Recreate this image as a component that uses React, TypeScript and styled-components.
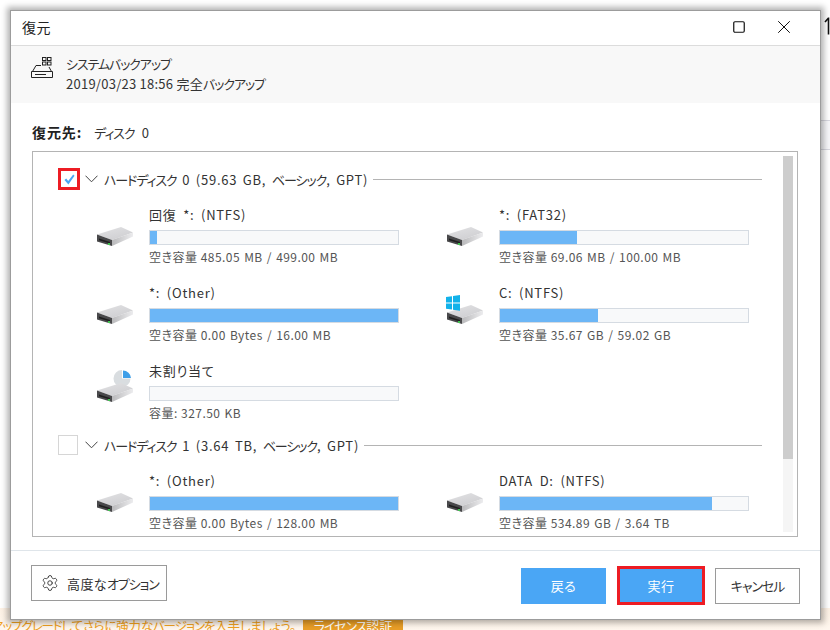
import React from 'react'
import styled, { createGlobalStyle } from 'styled-components'
import { Settings, Square, X } from 'lucide-react'

type Volume = {
    name: string
    label: string
    value: string
    used: number
    kind?: 'plain' | 'windows' | 'pie'
}

type Disk = {
    title: string
    checked: boolean
    volumes: Volume[]
}

const disks: Disk[] = [
    {
        title: 'ハードディスク 0 (59.63 GB, ベーシック, GPT)',
        checked: true,
        volumes: [
            { name: '回復 *: (NTFS)', label: '空き容量', value: '485.05 MB / 499.00 MB', used: 2.8 },
            { name: '*: (FAT32)', label: '空き容量', value: '69.06 MB / 100.00 MB', used: 30.9 },
            { name: '*: (Other)', label: '空き容量', value: '0.00 Bytes / 16.00 MB', used: 100 },
            { name: 'C: (NTFS)', label: '空き容量', value: '35.67 GB / 59.02 GB', used: 39.6, kind: 'windows' },
            { name: '未割り当て', label: '容量:', value: '327.50 KB', used: 0, kind: 'pie' }
        ]
    },
    {
        title: 'ハードディスク 1 (3.64 TB, ベーシック, GPT)',
        checked: false,
        volumes: [
            { name: '*: (Other)', label: '空き容量', value: '0.00 Bytes / 128.00 MB', used: 100 },
            { name: 'DATA D: (NTFS)', label: '空き容量', value: '534.89 GB / 3.64 TB', used: 85.4 }
        ]
    }
]

// the original UI font has narrow katakana, so those runs get tighter tracking
function Jp({ text }: { text: string }) {
    const parts = text.split(/([\u30a0-\u30ff]+)/)
    return (
        <>
            {parts.map((part, i) => (i % 2 === 1 ? <Katakana key={i}>{part}</Katakana> : part))}
        </>
    )
}

function DriveIcon({ kind = 'plain', id }: { kind?: Volume['kind']; id: string }) {
    return (
        <DriveSvg viewBox="0 0 40 44" width="40" height="44">
            <defs>
                <linearGradient id={`top-${id}`} x1="0" y1="0" x2="0.6" y2="1">
                    <stop offset="0" stopColor="#e2e2e4" />
                    <stop offset="1" stopColor="#cfcfd2" />
                </linearGradient>
                <linearGradient id={`side-${id}`} x1="0" y1="0" x2="1" y2="0">
                    <stop offset="0" stopColor="#b9b9bb" />
                    <stop offset="1" stopColor="#ececee" />
                </linearGradient>
            </defs>
            {kind === 'pie' && (
                <g>
                    <path d="M27 9 A8.5 8.5 0 1 0 35.5 17.5 L27 17.5 Z" fill="#d9dde0" />
                    <path d="M28 9.5 A8 8 0 0 1 36 17 L28 17 Z" fill="#3f9fe8" />
                </g>
            )}
            <polygon points="2,29.5 26,22 38,27.5 17,35" fill={`url(#top-${id})`} />
            <polygon points="2,29.5 17,35 17,41 2,36.5" fill="#48484a" />
            <polygon points="4,33.5 15,37 15,38.6 4,35.2" fill="#1e1e1e" />
            <polygon points="17,35 38,27.5 38,31.5 17,41" fill={`url(#side-${id})`} />
            <rect x="13" y="38" width="2" height="2" fill="#3fc24f" />
            {kind === 'windows' && (
                <g fill="#12b2ea">
                    <polygon points="1,14 7,13.2 7,19.6 1,19.6" />
                    <polygon points="8,13 15,12 15,19.6 8,19.6" />
                    <polygon points="1,20.6 7,20.6 7,26.6 1,25.8" />
                    <polygon points="8,20.6 15,20.6 15,27.8 8,26.8" />
                </g>
            )}
        </DriveSvg>
    )
}

function BackupIcon() {
    return (
        <HeaderSvg viewBox="0 0 22 22" width="22" height="22" fill="none" stroke="#222" strokeWidth="1">
            <path d="M1.5 14.5 L5 8.5 H10 M18 10 L20.5 14.5 M0.5 14.5 H21.5 V20.5 H0.5 Z" />
            <path d="M4 17.5 H15" />
            <rect x="11.5" y="0.5" width="3.5" height="3" />
            <rect x="16.5" y="0.5" width="3.5" height="3" />
            <rect x="11.5" y="5" width="3.5" height="3" />
            <rect x="16.5" y="5" width="3.5" height="3" />
        </HeaderSvg>
    )
}

export default function App() {
    return (
        <>
            <GlobalStyle />
            <Desktop>
                <EdgeStrip>
                    <EdgeArrow viewBox="0 0 8 18" width="8" height="18" fill="none" stroke="#111">
                        <path d="M5.5 0.5 V17.5 M5.5 1 L2 5" strokeWidth="1.6" />
                    </EdgeArrow>
                    <EdgeRow />
                </EdgeStrip>
                <UpgradeBar>
                    <UpgradeClip>
                        <UpgradeText>
                            <Jp text="アップグレードしてさらに強力なバージョンを入手しましょう。" />
                        </UpgradeText>
                    </UpgradeClip>
                    <LicenseButton>
                        <Jp text="ライセンス認証" />
                    </LicenseButton>
                </UpgradeBar>

                <Dialog>
                    <TitleBar>
                        <DialogTitle>復元</DialogTitle>
                        <WindowButton>
                            <Square size={14} strokeWidth={1.2} absoluteStrokeWidth />
                        </WindowButton>
                        <WindowButton>
                            <X size={22} strokeWidth={1} absoluteStrokeWidth />
                        </WindowButton>
                    </TitleBar>

                    <BackupInfo>
                        <BackupIcon />
                        <BackupText>
                            <div>
                                <Jp text="システムバックアップ" />
                            </div>
                            <div>
                                <Jp text="2019/03/23 18:56 完全バックアップ" />
                            </div>
                        </BackupText>
                    </BackupInfo>

                    <Target>
                        <TargetLabel>復元先:</TargetLabel>
                        <TargetValue>
                            <Jp text="ディスク 0" />
                        </TargetValue>
                    </Target>

                    <ListBox>
                        <ListScroll>
                            {disks.map((disk) => (
                                <DiskSection key={disk.title}>
                                    <DiskHeader>
                                        <CheckBox $marked={disk.checked}>
                                            {disk.checked && (
                                                <svg viewBox="0 0 12 12" width="11" height="11">
                                                    <polygon
                                                        points="0.5,6.5 2.4,5 4.6,7.6 10,0.5 11.5,1.8 4.8,11.5"
                                                        fill="#4aa6f5"
                                                    />
                                                </svg>
                                            )}
                                        </CheckBox>
                                        <svg viewBox="0 0 13 8" width="13" height="8" fill="none" stroke="#444">
                                            <path d="M0.5 0.7 L6.5 6.8 L12.5 0.7" />
                                        </svg>
                                        <DiskTitle>
                                            <Jp text={disk.title} />
                                        </DiskTitle>
                                        <DiskRule />
                                    </DiskHeader>
                                    <VolumeGrid>
                                        {disk.volumes.map((volume, i) => (
                                            <VolumeItem key={volume.name + i}>
                                                <DriveIcon kind={volume.kind} id={`${disk.title.length}-${i}`} />
                                                <VolumeBody>
                                                    <VolumeName>{volume.name}</VolumeName>
                                                    <UsageBar>
                                                        <UsageFill style={{ width: `${volume.used}%` }} />
                                                    </UsageBar>
                                                    <VolumeUsage>
                                                        {volume.label} <UsageValue>{volume.value}</UsageValue>
                                                    </VolumeUsage>
                                                </VolumeBody>
                                            </VolumeItem>
                                        ))}
                                    </VolumeGrid>
                                </DiskSection>
                            ))}
                        </ListScroll>
                        <ScrollTrack>
                            <ScrollThumb />
                        </ScrollTrack>
                    </ListBox>

                    <Footer>
                        <OptionButton>
                            <Settings size={18} strokeWidth={1.2} color="#333" />
                            <span>
                                <Jp text="高度なオプション" />
                            </span>
                        </OptionButton>
                        <FooterActions>
                            <PrimaryButton>戻る</PrimaryButton>
                            <PrimaryButton $outlined>実行</PrimaryButton>
                            <CancelButton>
                                <Jp text="キャンセル" />
                            </CancelButton>
                        </FooterActions>
                    </Footer>
                </Dialog>
            </Desktop>
        </>
    )
}

const GlobalStyle = createGlobalStyle`
    html, body {
        margin: 0;
        padding: 0;
        background: #fff;
    }
    * {
        box-sizing: border-box;
    }
`

const Desktop = styled.div`
    position: relative;
    width: 830px;
    height: 630px;
    overflow: hidden;
    background: #fff;
    font-family: 'Noto Sans CJK JP', 'Noto Sans', sans-serif;
    font-feature-settings: 'palt';
    color: #333;
`

const Katakana = styled.span`
    letter-spacing: -1.1px;
`

const EdgeStrip = styled.div`
    position: absolute;
    top: 0;
    right: 0;
    width: 9px;
    height: 200px;
`

const EdgeArrow = styled.svg`
    display: block;
    margin: 17px 0 85px 2px;
`

const EdgeRow = styled.div`
    height: 30px;
    background: #f7f7fa;
    border-top: 1px solid #d8d8e0;
    border-bottom: 1px solid #d8d8e0;
`

const UpgradeBar = styled.div`
    position: absolute;
    left: 0;
    right: 0;
    bottom: 0;
    height: 22px;
    display: flex;
    align-items: flex-start;
    padding-top: 10px;
    background: linear-gradient(#fdf1e4, #fff7ee);
    overflow: hidden;
`

const UpgradeClip = styled.div`
    width: 296px;
    flex: none;
    display: flex;
    justify-content: flex-end;
    overflow: hidden;
`

const UpgradeText = styled.div`
    flex: none;
    white-space: nowrap;
    font-size: 12.5px;
    line-height: 16px;
    letter-spacing: -0.2px;
    color: #f0a020;
`

const LicenseButton = styled.div`
    margin-left: 7px;
    width: 100px;
    height: 12px;
    background: #e99e27;
    color: #fff;
    font-size: 13px;
    line-height: 16px;
    text-align: center;
    overflow: hidden;
`

const Dialog = styled.div`
    position: absolute;
    left: 10px;
    top: 10px;
    width: 811px;
    height: 610px;
    display: flex;
    flex-direction: column;
    background: #fff;
    border: 1px solid #9c9c9c;
    box-shadow: 0 0 6px 3px rgba(0, 0, 0, 0.3);
`

const TitleBar = styled.div`
    height: 35px;
    flex: none;
    display: flex;
    align-items: center;
    padding: 0 14px 2px 11px;
    border-bottom: 1px solid #dcdcdc;
`

const DialogTitle = styled.div`
    flex: 1;
    font-size: 14px;
    letter-spacing: 0.5px;
    color: #222;
`

const WindowButton = styled.div`
    width: 45px;
    height: 22px;
    display: flex;
    align-items: center;
    justify-content: center;
    color: #111;
`

const BackupInfo = styled.div`
    height: 57px;
    flex: none;
    display: flex;
    align-items: center;
    gap: 13px;
    padding: 0 0 2px 20px;
    background: #f8f8f8;
`

const HeaderSvg = styled.svg`
    flex: none;
    margin-bottom: 12px;
`

const BackupText = styled.div`
    font-size: 13px;
    line-height: 20px;
    letter-spacing: 0.25px;
    color: #333;
`

const Target = styled.div`
    flex: none;
    height: 20px;
    margin-top: 19px;
    margin-bottom: 1px;
    padding-left: 21px;
    display: flex;
    align-items: center;
    gap: 12px;
    font-size: 13px;
    letter-spacing: 0.4px;
    color: #333;
`

const TargetLabel = styled.span`
    font-size: 14px;
    font-weight: 700;
    letter-spacing: 0.9px;
    color: #222;
`

const TargetValue = styled.span`
    word-spacing: 4px;
`

const ListBox = styled.div`
    flex: none;
    height: 386px;
    margin: 8px 22px 0 21px;
    display: flex;
    border: 1px solid #b4b4b4;
`

const ListScroll = styled.div`
    flex: 1;
    min-width: 0;
    overflow: hidden;
    padding: 16px 21px 0 25px;
`

const DiskSection = styled.section`
    margin-bottom: 12px;
`

const DiskHeader = styled.div`
    height: 22px;
    display: flex;
    align-items: center;
`

const CheckBox = styled.div<{ $marked: boolean }>`
    width: ${(p) => (p.$marked ? '22px' : '20px')};
    height: ${(p) => (p.$marked ? '22px' : '20px')};
    flex: none;
    margin-right: ${(p) => (p.$marked ? '5px' : '7px')};
    display: flex;
    align-items: center;
    justify-content: center;
    background: #fff;
    border: ${(p) => (p.$marked ? '3px solid #ed1c24' : '1px solid #d6d6d6')};
`

const DiskTitle = styled.div`
    margin-left: 6px;
    font-size: 13px;
    letter-spacing: 0.75px;
    word-spacing: 2px;
    white-space: nowrap;
    color: #333;
`

const DiskRule = styled.div`
    flex: 1;
    height: 1px;
    margin-left: 5px;
    background: #b4b4b4;
`

const VolumeGrid = styled.div`
    display: grid;
    grid-template-columns: 350px 304px;
    row-gap: 17px;
    margin-top: 15px;
    padding-left: 37px;
`

const VolumeItem = styled.div`
    display: flex;
    gap: 14px;
`

const DriveSvg = styled.svg`
    flex: none;
`

const VolumeBody = styled.div`
    width: 250px;
`

const VolumeName = styled.div`
    height: 20px;
    margin-bottom: 5px;
    font-size: 13px;
    line-height: 20px;
    letter-spacing: 0.75px;
    word-spacing: 3px;
    color: #333;
`

const UsageBar = styled.div`
    height: 15px;
    background: #f8f9fa;
    border: 1px solid #d5dbe2;
`

const UsageFill = styled.div`
    height: 100%;
    background: #6cb6f6;
`

const VolumeUsage = styled.div`
    height: 18px;
    margin-top: 3px;
    font-size: 12px;
    line-height: 18px;
    letter-spacing: 0.5px;
    white-space: nowrap;
    color: #555;
`

const UsageValue = styled.span`
    letter-spacing: 0.45px;
    word-spacing: 1px;
`

const ScrollTrack = styled.div`
    flex: none;
    width: 10px;
    margin: 4px 4px 4px 0;
    background: #f5f5f5;
`

const ScrollThumb = styled.div`
    height: 303px;
    background: #cdcdcd;
`

const Footer = styled.div`
    flex: none;
    height: 71px;
    margin-top: 13px;
    padding: 14px 20px 0 20px;
    display: flex;
    align-items: flex-start;
    justify-content: space-between;
    border-top: 1px solid #dfe5ea;
`

const OptionButton = styled.div`
    width: 136px;
    height: 36px;
    display: flex;
    align-items: center;
    gap: 8px;
    padding-left: 9px;
    border: 1px solid #9a9a9a;
    font-size: 13px;
    letter-spacing: 0.4px;
    white-space: nowrap;
    color: #333;
`

const FooterActions = styled.div`
    display: flex;
    align-items: center;
    gap: 10px;
    margin-top: 1px;
`

const PrimaryButton = styled.div<{ $outlined?: boolean }>`
    width: ${(p) => (p.$outlined ? '88px' : '85px')};
    height: ${(p) => (p.$outlined ? '39px' : '36px')};
    margin-left: ${(p) => (p.$outlined ? '1px' : '0')};
    display: flex;
    align-items: center;
    justify-content: center;
    background: #4aa6f5;
    border: ${(p) => (p.$outlined ? '3px solid #ed1c24' : 'none')};
    font-size: 13px;
    letter-spacing: 0.5px;
    color: #fff;
`

const CancelButton = styled.div`
    width: 85px;
    height: 36px;
    display: flex;
    align-items: center;
    justify-content: center;
    background: #fff;
    border: 1px solid #9a9a9a;
    font-size: 13px;
    color: #333;
`
